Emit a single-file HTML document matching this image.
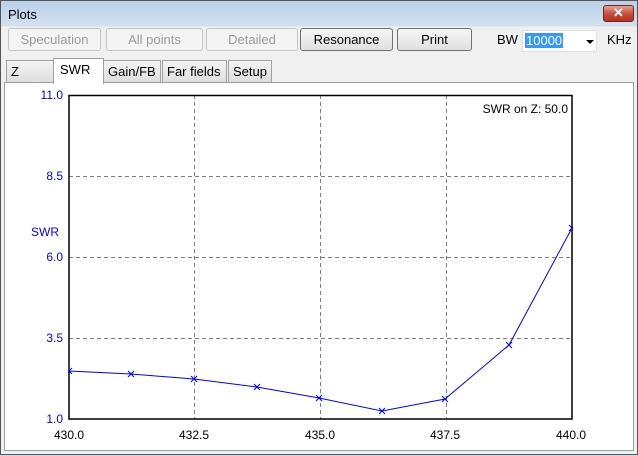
<!DOCTYPE html>
<html><head><style>
body{margin:0;width:638px;height:455px;overflow:hidden;background:#c9dcef;font-family:"Liberation Sans",sans-serif;font-size:13px;}
.win{position:absolute;left:0;top:0;width:638px;height:455px;background:linear-gradient(#b9d0e9,#d2e1f1 25px,#f0f0f0 26px);border:1px solid #555;box-sizing:border-box;}
.title{position:absolute;left:7px;top:6px;font-size:13px;color:#000;}
.close{position:absolute;left:602px;top:4px;width:31px;height:17px;border:1px solid #6b2a22;border-radius:3px;background:linear-gradient(#e8a394,#c9503c 50%,#b3321f);box-sizing:border-box;color:#fff;font-weight:bold;text-align:center;line-height:14px;font-size:13px;}
.btn{position:absolute;top:27px;height:23px;border:1px solid #adadad;border-radius:3px;box-sizing:border-box;background:linear-gradient(#f6f6f6,#e0e0e0);text-align:center;line-height:21px;font-size:13px;}
.dis{color:#9a9a9a;border-color:#c5c5c5;background:#f4f4f4;}
.en{border-color:#707070;color:#000;}
.tab{position:absolute;top:59px;height:22px;border:1px solid #a0a0a0;border-bottom:none;box-sizing:border-box;background:linear-gradient(#f4f4f4,#dedede);line-height:21px;padding-left:4px;font-size:13px;}
.panel{position:absolute;left:3px;top:81px;width:630px;height:369px;background:#fff;border:1px solid #a0a0a0;box-sizing:border-box;}
</style></head><body>
<div class="win">
<div class="title">Plots</div>
<div class="close">✕</div>
<div class="btn dis" style="left:7px;width:93px;">Speculation</div>
<div class="btn dis" style="left:105px;width:97px;">All points</div>
<div class="btn dis" style="left:205px;width:92px;">Detailed</div>
<div class="btn en" style="left:299px;width:93px;">Resonance</div>
<div class="btn en" style="left:396px;width:75px;">Print</div>
<div style="position:absolute;left:496px;top:31px;">BW</div>
<div style="position:absolute;left:521px;top:29px;width:75px;height:22px;background:#fff;border:1px solid #e0e0e0;box-sizing:border-box;"><span style="position:absolute;left:2px;top:2px;background:#3399ff;color:#fff;line-height:15px;padding:0 1px;">10000</span><span style="position:absolute;left:63px;top:9px;border-left:4px solid transparent;border-right:4px solid transparent;border-top:4px solid #000;"></span></div>
<div style="position:absolute;left:606px;top:31px;">KHz</div>
<div class="tab" style="left:5px;width:48px;">Z</div>
<div class="tab" style="left:102px;width:58px;">Gain/FB</div>
<div class="tab" style="left:161px;width:65px;">Far fields</div>
<div class="tab" style="left:227px;width:44px;">Setup</div>
<div class="panel"></div>
<div class="tab" style="left:52px;top:57px;width:51px;height:26px;background:#fff;border-color:#a0a0a0;padding-left:6px;z-index:2">SWR</div>
<svg style="position:absolute;left:0;top:0" width="638" height="455" font-family="Liberation Sans" font-size="12">
<g stroke="#808080" stroke-dasharray="4,3" stroke-width="1">
<line x1="193.5" y1="94" x2="193.5" y2="418"/><line x1="319.5" y1="94" x2="319.5" y2="418"/><line x1="445.5" y1="94" x2="445.5" y2="418"/>
<line x1="68" y1="175.5" x2="571" y2="175.5"/><line x1="68" y1="256.5" x2="571" y2="256.5"/><line x1="68" y1="337.5" x2="571" y2="337.5"/>
</g>
<rect x="68" y="94.5" width="503" height="323.5" fill="none" stroke="#000" stroke-width="1.5"/>
<polyline fill="none" stroke="#0000ff" stroke-width="1" points="68,370 130,373 193,378 256,386 318,397 381,410 444,398 508,344 571,227"/>
<g stroke="#0000ff" stroke-width="1">
<path d="M127,370l6,6M133,370l-6,6M190,375l6,6M196,375l-6,6M253,383l6,6M259,383l-6,6M315,394l6,6M321,394l-6,6M378,407l6,6M384,407l-6,6M441,395l6,6M447,395l-6,6M505,341l6,6M511,341l-6,6M568,224l4,4M568,230l4,-4M68,370l3,-3M68,370l3,3"/>
</g>
<g fill="#0000ff" text-anchor="end">
<text x="62" y="98">11.0</text><text x="62" y="179">8.5</text><text x="62" y="260">6.0</text><text x="62" y="341">3.5</text><text x="62" y="422">1.0</text>
<text x="58" y="235">SWR</text>
</g>
<g fill="#000" text-anchor="middle">
<text x="68" y="438">430.0</text><text x="193" y="438">432.5</text><text x="319" y="438">435.0</text><text x="444" y="438">437.5</text><text x="570" y="438">440.0</text>
</g>
<text x="567" y="112" text-anchor="end" fill="#000">SWR on Z: 50.0</text>
</svg>
</div>
</body></html>
